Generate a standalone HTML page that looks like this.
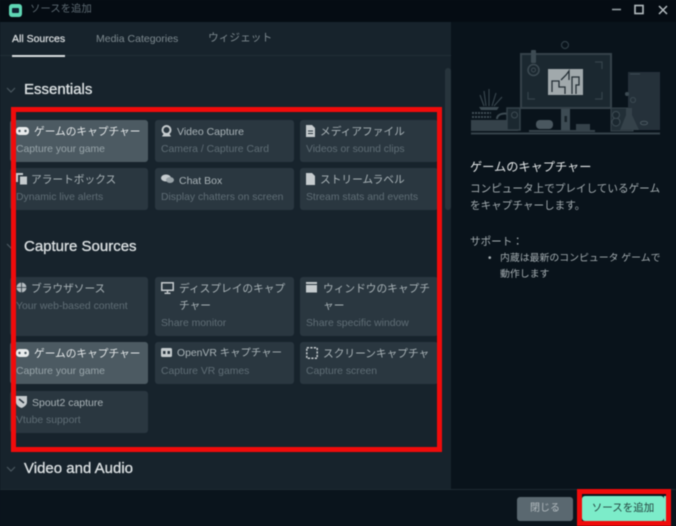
<!DOCTYPE html>
<html lang="ja">
<head>
<meta charset="utf-8">
<title>ソースを追加</title>
<style>
html,body{margin:0;padding:0;background:#0a141c}
#app{position:relative;width:676px;height:526px;overflow:hidden;background:#0a141c;font-family:"Liberation Sans","Noto Sans CJK JP",sans-serif;color:#b9c1c4;filter:blur(.45px)}
#app>div,#app>svg{position:absolute}
.card{position:absolute;background:#2a3740;border-radius:3px;box-sizing:border-box}
.card.on{background:#4c5a62}
.t{position:absolute;font-size:10.7px;line-height:16px;color:#a9b3b7;white-space:nowrap;margin-top:1px}
.d{position:absolute;font-size:10.4px;line-height:14px;color:#5f6d75;white-space:nowrap;margin-top:1px}
.on .t{color:#e3e7e8}
.on .d{color:#98a4a9}
.ic{position:absolute}
.h{position:absolute;left:24px;font-size:15px;line-height:18px;color:#dce1e3;white-space:nowrap;-webkit-text-stroke:.3px #dce1e3}
.chev{position:absolute;left:6px}
.red{position:absolute;box-sizing:border-box;border:5px solid #f00b0b}
</style>
</head>
<body>
<div id="app">
  <div style="left:0;top:0;width:676px;height:22px;background:#050c13"></div>
  <div style="left:9px;top:4px;width:13px;height:13px;background:#5fd6b4;border-radius:3px"></div>
  <div style="left:12px;top:8px;width:7px;height:5px;background:#123;border-radius:1px"></div>
  <div style="left:30px;top:2px;font-size:10.4px;line-height:16px;color:#5d6a72">ソースを追加</div>
  <svg style="left:610px;top:3px" width="62" height="14" viewBox="0 0 62 14">
    <path d="M2 6.500H11" stroke="#9aa4a9" stroke-width="1.500"/>
    <rect x="25" y="2.500" width="8" height="8" fill="none" stroke="#b4bcc0" stroke-width="1.600"/>
    <path d="M49 3L57 11M57 3L49 11" stroke="#b4bcc0" stroke-width="1.500"/>
  </svg>

  <div style="left:0;top:22px;width:452px;height:467px;background:#17232c"></div>
  <div style="left:0;top:55px;width:452px;height:1px;background:#212e37"></div>
  <div style="left:12px;top:31px;font-size:10.5px;line-height:16px;color:#d9dddf;-webkit-text-stroke:.25px #d9dddf">All Sources</div>
  <div style="left:12px;top:55px;width:53px;height:2px;background:#d8dcde"></div>
  <div style="left:96px;top:31px;font-size:10.5px;line-height:16px;color:#7d898f">Media Categories</div>
  <div style="left:208px;top:30px;font-size:10.7px;line-height:16px;color:#7d898f">ウィジェット</div>

  <div style="left:445px;top:68px;width:6px;height:142px;background:#27343c;border-radius:3px"></div>
  <div style="left:451px;top:22px;width:225px;height:467px;background:#09131b"></div>
  <div style="left:0;top:489px;width:676px;height:1px;background:#1d2a32"></div>

  <svg class="chev" style="top:85px" width="10" height="10" viewBox="0 0 10 10"><path d="M1 3L5 7L9 3" fill="none" stroke="#4a575f" stroke-width="1.200"/></svg>
  <div class="h" style="top:81px">Essentials</div>
  <svg class="chev" style="top:241px" width="10" height="10" viewBox="0 0 10 10"><path d="M1 3L5 7L9 3" fill="none" stroke="#4a575f" stroke-width="1.200"/></svg>
  <div class="h" style="top:238px">Capture Sources</div>
  <svg class="chev" style="top:464px" width="10" height="10" viewBox="0 0 10 10"><path d="M1 3L5 7L9 3" fill="none" stroke="#4a575f" stroke-width="1.200"/></svg>
  <div class="h" style="top:460px">Video and Audio</div>

  <!-- row 1 -->
  <div class="card on" style="left:10px;top:120px;width:138px;height:42px">
    <svg class="ic" style="left:6px;top:6px" width="14" height="10" viewBox="0 0 14 10"><rect x="0" y="1" width="13" height="8" rx="3.500" fill="#e8ebec"/><circle cx="3.500" cy="5" r="1.200" fill="#4c5a62"/><circle cx="9.500" cy="5" r="1.200" fill="#4c5a62"/></svg>
    <div class="t" style="left:24px;top:3px">ゲームのキャプチャー</div>
    <div class="d" style="left:6px;top:22px">Capture your game</div>
  </div>
  <div class="card" style="left:155px;top:120px;width:139px;height:42px">
    <svg class="ic" style="left:6px;top:5px" width="11" height="12" viewBox="0 0 11 12"><circle cx="5.500" cy="5" r="4" fill="none" stroke="#c5cbce" stroke-width="2"/><path d="M1 11.500L3 8H8L10 11.500Z" fill="#c5cbce"/></svg>
    <div class="t" style="left:22px;top:3px;font-size:10.500px">Video Capture</div>
    <div class="d" style="left:6px;top:22px">Camera / Capture Card</div>
  </div>
  <div class="card" style="left:300px;top:120px;width:138px;height:42px">
    <svg class="ic" style="left:6px;top:5px" width="9" height="12" viewBox="0 0 9 12"><path d="M0 0H6L9 3V12H0Z" fill="#c5cbce"/><path d="M2 6H7M2 8.500H7" stroke="#2a3740"/></svg>
    <div class="t" style="left:20px;top:3px">メディアファイル</div>
    <div class="d" style="left:6px;top:22px">Videos or sound clips</div>
  </div>
  <!-- row 2 -->
  <div class="card" style="left:10px;top:168px;width:138px;height:42px">
    <svg class="ic" style="left:6px;top:5px" width="11" height="12" viewBox="0 0 11 12"><path d="M0 0H7V2H2V9H0Z" fill="#c5cbce"/><rect x="4" y="3.500" width="7" height="8" fill="#c5cbce"/></svg>
    <div class="t" style="left:21px;top:3px">アラートボックス</div>
    <div class="d" style="left:6px;top:22px">Dynamic live alerts</div>
  </div>
  <div class="card" style="left:155px;top:168px;width:139px;height:42px">
    <svg class="ic" style="left:6px;top:6px" width="13" height="10" viewBox="0 0 13 10"><ellipse cx="5" cy="4" rx="5" ry="3.500" fill="#c5cbce"/><ellipse cx="9" cy="6" rx="4" ry="3" fill="#98a2a7"/></svg>
    <div class="t" style="left:24px;top:4px;font-size:10.500px">Chat Box</div>
    <div class="d" style="left:6px;top:22px">Display chatters on screen</div>
  </div>
  <div class="card" style="left:300px;top:168px;width:138px;height:42px">
    <svg class="ic" style="left:6px;top:5px" width="9" height="12" viewBox="0 0 9 12"><path d="M0 0H6L9 3V12H0Z" fill="#c5cbce"/></svg>
    <div class="t" style="left:20px;top:3px">ストリームラベル</div>
    <div class="d" style="left:6px;top:22px">Stream stats and events</div>
  </div>
  <!-- capture -->
  <div class="card" style="left:10px;top:277px;width:138px;height:59px">
    <svg class="ic" style="left:6px;top:5px" width="11" height="11" viewBox="0 0 11 11"><circle cx="5.500" cy="5.500" r="5" fill="#b5bcc0"/><path d="M0 5.500H11M5.500 0V11" stroke="#2a3740" stroke-width=".8"/></svg>
    <div class="t" style="left:21px;top:3px">ブラウザソース</div>
    <div class="d" style="left:6px;top:22px">Your web-based content</div>
  </div>
  <div class="card" style="left:155px;top:277px;width:139px;height:59px">
    <svg class="ic" style="left:6px;top:5px" width="13" height="12" viewBox="0 0 13 12"><rect x=".8" y=".8" width="11.400" height="7.500" fill="none" stroke="#c5cbce" stroke-width="1.500"/><path d="M6.500 8.500V11M3.500 11.300H9.500" stroke="#c5cbce" stroke-width="1.400"/></svg>
    <div class="t" style="left:24px;top:3px;line-height:17px">ディスプレイのキャプ<br>チャー</div>
    <div class="d" style="left:6px;top:39px">Share monitor</div>
  </div>
  <div class="card" style="left:300px;top:277px;width:138px;height:59px">
    <svg class="ic" style="left:6px;top:5px" width="11" height="11" viewBox="0 0 11 11"><rect x="0" y="0" width="11" height="10.500" fill="#c5cbce"/><path d="M0 2.500H11" stroke="#2a3740"/></svg>
    <div class="t" style="left:23px;top:3px;line-height:17px">ウィンドウのキャプチ<br>ャー</div>
    <div class="d" style="left:6px;top:39px">Share specific window</div>
  </div>
  <div class="card on" style="left:10px;top:342px;width:138px;height:42px">
    <svg class="ic" style="left:6px;top:6px" width="14" height="10" viewBox="0 0 14 10"><rect x="0" y="1" width="13" height="8" rx="3.500" fill="#e8ebec"/><circle cx="3.500" cy="5" r="1.200" fill="#4c5a62"/><circle cx="9.500" cy="5" r="1.200" fill="#4c5a62"/></svg>
    <div class="t" style="left:24px;top:3px">ゲームのキャプチャー</div>
    <div class="d" style="left:6px;top:22px">Capture your game</div>
  </div>
  <div class="card" style="left:155px;top:342px;width:139px;height:42px">
    <svg class="ic" style="left:6px;top:6px" width="12" height="10" viewBox="0 0 12 10"><rect x="0" y="0" width="11" height="9" rx="1.500" fill="#c5cbce"/><rect x="2" y="3" width="2.500" height="3" fill="#2a3740"/><rect x="6.500" y="3" width="2.500" height="3" fill="#2a3740"/></svg>
    <div class="t" style="left:22px;top:3px;font-size:10.4px">OpenVR キャプチャー</div>
    <div class="d" style="left:6px;top:22px">Capture VR games</div>
  </div>
  <div class="card" style="left:300px;top:342px;width:138px;height:42px">
    <svg class="ic" style="left:6px;top:5px" width="12" height="12" viewBox="0 0 12 12"><rect x=".8" y=".8" width="10.400" height="10.400" fill="none" stroke="#c5cbce" stroke-width="1.500" stroke-dasharray="2.200 1.300"/></svg>
    <div class="t" style="left:23px;top:3px">スクリーンキャプチャ</div>
    <div class="d" style="left:6px;top:22px">Capture screen</div>
  </div>
  <div class="card" style="left:10px;top:391px;width:138px;height:42px">
    <svg class="ic" style="left:6px;top:5px" width="11" height="12" viewBox="0 0 11 12"><path d="M0 0H11V6C11 9 8 11 5.500 12C3 11 0 9 0 6Z" fill="#c5cbce"/><path d="M3 3L8 7" stroke="#2a3740" stroke-width="1.500"/></svg>
    <div class="t" style="left:22px;top:3px;font-size:10.500px">Spout2 capture</div>
    <div class="d" style="left:6px;top:22px">Vtube support</div>
  </div>

  <!-- illustration -->
  <svg style="left:466px;top:35px;opacity:.85" width="200" height="105" viewBox="466 35 200 105">
    <circle cx="565" cy="45" r="3.500" fill="none" stroke="#35444d" stroke-width="1.200"/>
    <rect x="521" y="54" width="90" height="54" fill="#1f2c34" stroke="#3d4b53" stroke-width="2"/>
    <rect x="531" y="50" width="5" height="13" rx="1" fill="#47555d"/>
    <circle cx="533.500" cy="70" r="5.500" fill="#1f2c34" stroke="#47555d" stroke-width="1.500"/>
    <circle cx="533.500" cy="70" r="2" fill="none" stroke="#47555d"/>
    <path d="M528 92V99H535M595 62H602V69M602 92V99H595" fill="none" stroke="#3d4b53" stroke-width="1.200"/>
    <rect x="548" y="69" width="35" height="26" fill="#bcc4c6"/>
    <path d="M552 92V81H559V87H565V94M561 80L566 75L569 71V80M572 94V77H579V85H576V94" fill="none" stroke="#2b353b" stroke-width="1.300"/>
    <rect x="561" y="109" width="9" height="22" fill="#47555d"/>
    <rect x="564.500" y="116" width="2.500" height="6" fill="#1a252c"/>
    <rect x="536" y="120" width="17" height="9" rx="4" fill="#56646c"/>
    <rect x="576" y="124" width="14" height="6" fill="#3d4b53"/>
    <path d="M529 131H595" stroke="#3d4b53" stroke-width="2"/>
    <rect x="471" y="120" width="47" height="11" fill="#3d4b53"/>
    <circle cx="513" cy="125" r="2" fill="#212e36"/>
    <path d="M472 113H491M472 117H491" stroke="#47555d" stroke-width="2" stroke-dasharray="2 1"/>
    <path d="M497 119C497 113 507 112 511 116" fill="none" stroke="#47555d" stroke-width="2"/>
    <rect x="507" y="108" width="13" height="22" fill="#1f2c34" stroke="#3d4b53" stroke-width="1.500"/>
    <circle cx="514.500" cy="115" r="3" fill="none" stroke="#47555d"/>
    <path d="M479 107H499L497 110H481Z" fill="#47555d"/>
    <path d="M484 106L480 95M486 106L484 91M489 106V89M492 106L496 93M494 106L502 97" stroke="#3f4d55" stroke-width="1.200" fill="none"/>
    <rect x="611" y="108" width="22" height="23" fill="#27343c" stroke="#3d4b53"/>
    <circle cx="616" cy="122" r="4" fill="#1f2c34" stroke="#47555d"/>
    <circle cx="616" cy="115" r="3.500" fill="#1f2c34" stroke="#47555d"/>
    <rect x="628" y="72" width="32" height="58" fill="#2a3740"/>
    <path d="M630 74H640" stroke="#47555d"/>
    <path d="M626 108H632V115L639 130H620L626 115Z" fill="#3d4b53"/>
    <circle cx="627" cy="94" r="2" fill="#47555d"/>
    <circle cx="633" cy="100" r="2.500" fill="none" stroke="#47555d"/>
    <ellipse cx="644" cy="123" rx="3.500" ry="1.800" fill="none" stroke="#56646c"/>
    <path d="M471 133.500H660" stroke="#3d4b53" stroke-width="2"/>
  </svg>

  <div style="left:470px;top:158px;font-size:12.2px;line-height:18px;color:#e1e5e6;white-space:nowrap">ゲームのキャプチャー</div>
  <div style="left:470px;top:181px;font-size:10.6px;line-height:17px;color:#a4adb1;width:196px;white-space:nowrap">コンピュータ上でプレイしているゲーム<br>をキャプチャーします。</div>
  <div style="left:470px;top:234px;font-size:10.6px;line-height:16px;color:#a4adb1;white-space:nowrap">サポート：</div>
  <div style="left:488px;top:251px;width:4px;height:0;font-size:10px;line-height:16px;color:#a4adb1">•</div>
  <div style="left:500px;top:251px;font-size:9.9px;line-height:16px;color:#a4adb1;white-space:nowrap">内蔵は最新のコンピュータ ゲームで<br>動作します</div>

  <div style="left:517px;top:497px;width:56px;height:24px;background:#5a6870;border-radius:3px;font-size:10px;line-height:24px;text-align:center;color:#b3bbbf">閉じる</div>
  <div style="left:582px;top:496px;width:82px;height:25px;background:#7cecc9;border-radius:3px;font-size:10.5px;line-height:25px;text-align:center;color:#24443f">ソースを追加</div>
  <div style="left:664px;top:496px;width:2px;height:25px;background:#7cecc9"></div>

  <div class="red" style="left:11px;top:107px;width:431px;height:345px"></div>
  <div class="red" style="left:577px;top:489px;width:94px;height:37px"></div>
</div>
</body>
</html>
